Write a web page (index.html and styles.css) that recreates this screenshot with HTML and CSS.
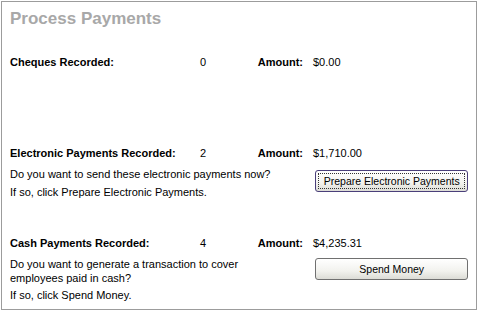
FILE: index.html
```html
<!DOCTYPE html>
<html lang="en">
<head>
    <meta charset="UTF-8">
    <title>Process Payments</title>
    <link rel="stylesheet" href="styles.css">
</head>
<body>
    <div class="panel">
        <h1 class="title">Process Payments</h1>

        <div class="section section-cheques">
            <div class="row">
                <span class="label">Cheques Recorded:</span>
                <span class="count">0</span>
                <span class="amount-label">Amount:</span>
                <span class="amount">$0.00</span>
            </div>
        </div>

        <div class="section section-electronic">
            <div class="row">
                <span class="label">Electronic Payments Recorded:</span>
                <span class="count">2</span>
                <span class="amount-label">Amount:</span>
                <span class="amount">$1,710.00</span>
            </div>
            <div class="action">
                <div class="desc">
                    <p>Do you want to send these electronic payments now?</p>
                    <p>If so, click Prepare Electronic Payments.</p>
                </div>
                <button class="btn btn-focus">Prepare Electronic Payments</button>
            </div>
        </div>

        <div class="section section-cash">
            <div class="row">
                <span class="label">Cash Payments Recorded:</span>
                <span class="count">4</span>
                <span class="amount-label">Amount:</span>
                <span class="amount">$4,235.31</span>
            </div>
            <div class="action">
                <div class="desc">
                    <p>Do you want to generate a transaction to cover employees paid in cash?</p>
                    <p>If so, click Spend Money.</p>
                </div>
                <button class="btn">Spend Money</button>
            </div>
        </div>
    </div>
</body>
</html>
```

FILE: styles.css
```css
body { margin: 0; background: #fff; font-family: "Liberation Sans", Arial, sans-serif; font-size: 11px; line-height: 14px; color: #000; }
.panel { box-sizing: border-box; width: 476px; height: 309px; margin: 1px; border: 1px solid #9c9c9c; padding: 7px 8px 0 8px; }
.title { margin: 0; font-size: 17px; line-height: 20px; font-weight: bold; color: #a8a8a8; }
.section-cheques { margin-top: 26px; }
.section-electronic { margin-top: 77px; }
.section-cash { margin-top: 33px; }
.row { display: grid; grid-template-columns: 190px 47px 56px auto; font-weight: bold; }
.row .count, .row .amount { font-weight: normal; }
.row .amount-label { text-align: right; }
.row .amount { padding-left: 10px; }
.action { display: flex; align-items: flex-start; margin-top: 7px; }
.desc { width: 282px; }
.desc p { margin: 0 0 4px 0; }
.section-cash .desc p { margin-bottom: 3px; }
.btn { margin: 3px 0 0 26px; width: 154px; height: 22px; padding: 0; font-family: "Liberation Sans", Arial, sans-serif; font-size: 10.5px; color: #000; border: 1px solid #707070; border-radius: 3px; background: linear-gradient(#ffffff, #f2f2ee 60%, #dcdcd6); }
.section-cash .btn { margin-top: 1px; }
.btn-focus { border-color: #4a3f7a; outline: 1px dotted #333; outline-offset: -4px; }
```
